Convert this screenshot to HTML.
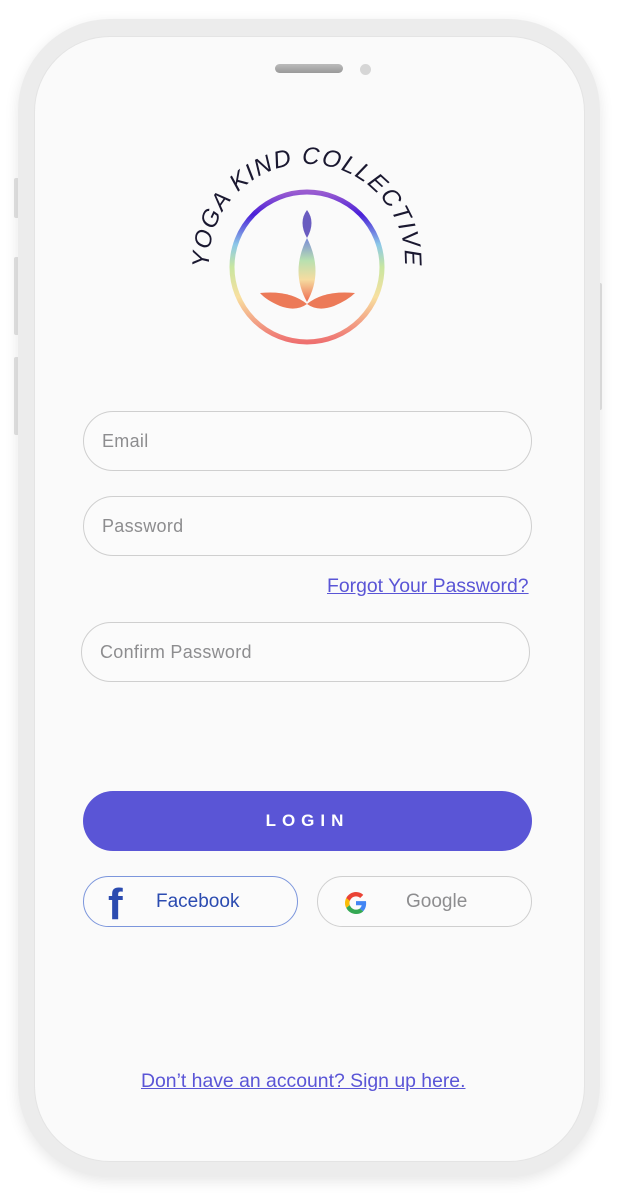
<!DOCTYPE html>
<html><head><meta charset="utf-8"><style>
*{margin:0;padding:0;box-sizing:border-box}
body{width:617px;height:1196px;background:#fff;position:relative;overflow:hidden;font-family:"Liberation Sans",sans-serif}
.frame{position:absolute;left:18px;top:19px;width:582px;height:1158px;border-radius:92px;background:#ececec;box-shadow:0 4px 14px rgba(0,0,0,0.10)}
.screen{position:absolute;left:34px;top:36px;width:551px;height:1126px;border-radius:76px;background:#fafafa;border:1px solid #e4e4e4}
.btn{position:absolute;background:#e2e2e2;border-radius:2px}
.field{position:absolute;height:60px;border:1px solid #cfcfcf;border-radius:30px;background:#fbfbfb;color:#8d8d8f;font-size:18px;line-height:58px;padding-left:18px;letter-spacing:0.3px}
.link{position:absolute;color:#5a55d6;text-decoration:underline;font-size:19.4px}
</style></head><body>
<div class="btn" style="left:14px;top:178px;width:5px;height:40px"></div>
<div class="btn" style="left:14px;top:257px;width:5px;height:78px"></div>
<div class="btn" style="left:14px;top:357px;width:5px;height:78px"></div>
<div class="btn" style="left:598px;top:283px;width:4px;height:127px"></div>
<div class="frame"></div>
<div class="screen"></div>
<div style="position:absolute;left:275px;top:64px;width:68px;height:9px;border-radius:5px;background:linear-gradient(#bbb,#999)"></div>
<div style="position:absolute;left:360px;top:64px;width:11px;height:11px;border-radius:50%;background:#d6d6d6"></div>

<svg style="position:absolute;left:0;top:0" width="617" height="400" viewBox="0 0 617 400">
<defs>
<linearGradient id="rg" x1="0" y1="0" x2="0" y2="1">
<stop offset="0" stop-color="#9a5cd0"/><stop offset="0.15" stop-color="#4a1fd8"/><stop offset="0.35" stop-color="#8cc8e8"/><stop offset="0.5" stop-color="#c8e6a0"/><stop offset="0.7" stop-color="#f8e0a0"/><stop offset="1" stop-color="#ee7070"/></linearGradient>
<linearGradient id="bg" x1="0" y1="0" x2="0" y2="1">
<stop offset="0" stop-color="#7a8ad8"/><stop offset="0.35" stop-color="#b8e0b0"/><stop offset="0.65" stop-color="#f6dca0"/><stop offset="1" stop-color="#ee6a50"/></linearGradient>
<path id="arc" d="M210.5,279 A98,98 0 1 1 403.5,279"/>
</defs>
<circle cx="307" cy="267" r="75" fill="none" stroke="url(#rg)" stroke-width="5"/>
<path d="M307,210 Q316,222 307,238 Q298,222 307,210Z" fill="#6a5cc0"/>
<path d="M307,238 Q324,272 307,302 Q290,272 307,238Z" fill="url(#bg)"/>
<path d="M260,293 Q290,290 307,304 Q296,312 280,306 Q266,300 260,293Z" fill="#ec7a58"/>
<path d="M355,293 Q324,290 307,304 Q318,312 334,306 Q348,300 355,293Z" fill="#ec7a58"/>
<text font-family="Liberation Sans,sans-serif" font-size="24" fill="#1a1830" letter-spacing="1.5" font-style="italic"><textPath href="#arc" startOffset="50%" text-anchor="middle">YOGA KIND COLLECTIVE</textPath></text>
</svg>

<div class="field" style="left:83px;top:411px;width:449px">Email</div>
<div class="field" style="left:83px;top:496px;width:449px">Password</div>
<div class="link" style="left:327px;top:575px">Forgot Your Password?</div>
<div class="field" style="left:81px;top:622px;width:449px">Confirm Password</div>
<div style="position:absolute;left:83px;top:791px;width:449px;height:60px;border-radius:30px;background:#5a55d6;color:#fff;font-weight:bold;font-size:17px;letter-spacing:6px;text-align:center;line-height:60px">LOGIN</div>
<div style="position:absolute;left:83px;top:876px;width:215px;height:51px;border:1px solid #7c96dc;border-radius:26px;background:#fbfbfb">
<div style="position:absolute;left:24px;top:6px;color:#2b4bb0;font-weight:bold;font-size:44px;line-height:44px">f</div>
<div style="position:absolute;left:72px;top:0;color:#2b4bb0;font-size:19px;line-height:49px">Facebook</div></div>
<div style="position:absolute;left:317px;top:876px;width:215px;height:51px;border:1px solid #cfcfcf;border-radius:26px;background:#fbfbfb">
<svg style="position:absolute;left:27px;top:15px" width="22" height="22" viewBox="0 0 48 48"><path fill="#EA4335" d="M24 9.5c3.5 0 6.6 1.2 9.1 3.6l6.8-6.8C35.8 2.4 30.3 0 24 0 14.6 0 6.6 5.4 2.7 13.3l7.9 6.2C12.5 13.6 17.800 9.5 24 9.5z"/><path fill="#4285F4" d="M46.1 24.5c0-1.6-.1-3.1-.4-4.5H24v9h12.4c-.5 2.9-2.2 5.3-4.6 7l7.7 6c4.5-4.2 6.6-10.3 6.6-17.5z"/><path fill="#FBBC05" d="M10.5 28.6c-.5-1.4-.8-3-.8-4.6s.3-3.2.8-4.6l-7.9-6.2C1 16.5 0 20.1 0 24s1 7.5 2.7 10.7l7.8-6.1z"/><path fill="#34A853" d="M24 48c6.5 0 11.9-2.1 15.9-5.8l-7.7-6c-2.1 1.4-4.9 2.3-8.2 2.3-6.2 0-11.5-4.200-13.4-9.9l-7.9 6.1C6.6 42.6 14.6 48 24 48z"/></svg>
<div style="position:absolute;left:88px;top:0;color:#8d8d8f;font-size:19px;line-height:49px">Google</div></div>
<div class="link" style="left:141px;top:1070px">Don’t have an account? Sign up here.</div>
</body></html>
